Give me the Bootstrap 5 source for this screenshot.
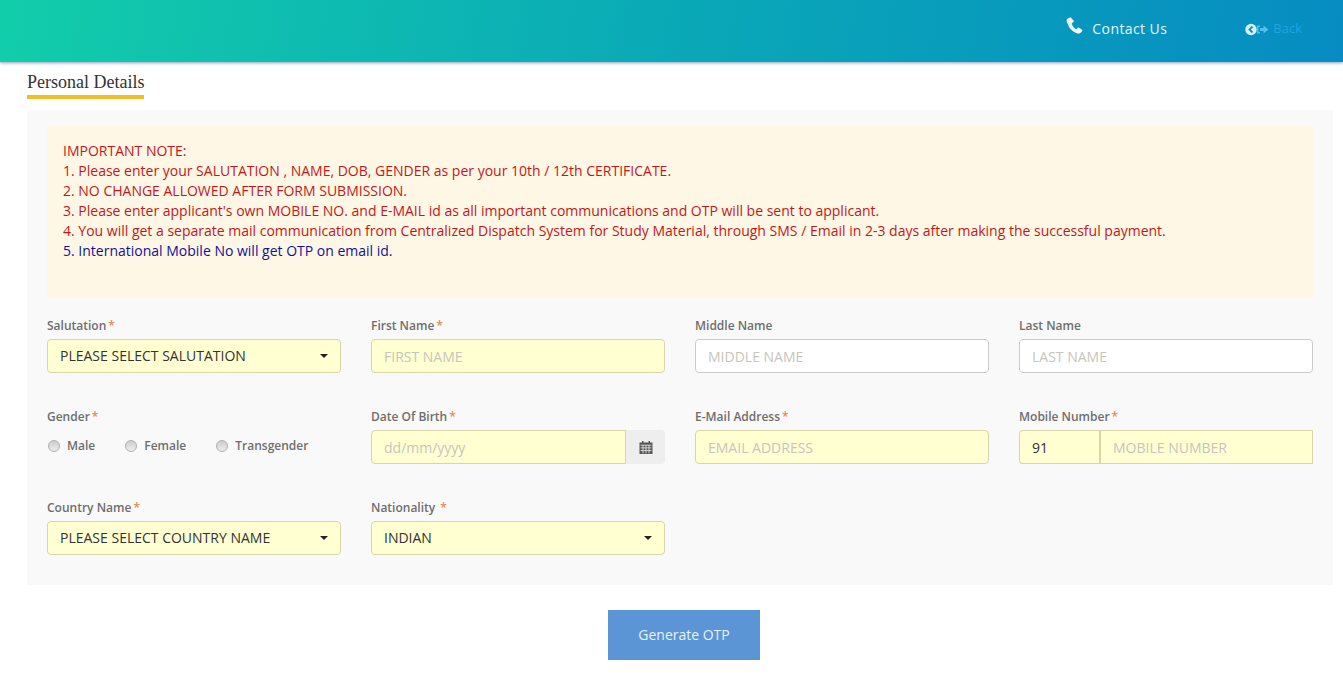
<!DOCTYPE html>
<html lang="en">
<head>
<meta charset="utf-8">
<title>Personal Details</title>
<link href="https://cdn.jsdelivr.net/npm/bootstrap@5.3.0/dist/css/bootstrap.min.css" rel="stylesheet">
<style>
html,body{height:100%;overflow:hidden}
body{font-family:"Open Sans",sans-serif;font-size:14px;color:#555;background:#fff}
.top-bar{height:62px;background:linear-gradient(100deg,#12cdaa 0%,#0aa9b7 50%,#068cc2 100%);box-shadow:0 1px 3px rgba(20,70,130,.5);padding-right:41px}
.contact-link{color:#e4f6fb;font-size:14px;letter-spacing:.42px;text-decoration:none;margin-right:78px;gap:9px;margin-top:-5px}
.contact-link svg{margin-top:-6px}
.back-link{color:#1ea4df;font-size:13px;text-decoration:none;margin-top:-4px;gap:4px}
.page-body{padding:0 10px 0 27px}
.page-title{display:inline-block;font-family:"Liberation Serif",serif;font-size:18px;font-weight:400;line-height:21px;color:#333;margin:10px 0 0;padding-bottom:2px;border-bottom:4px solid #f0bf28}
.form-panel{background:#f9f9f9;margin-top:11px;height:475px;padding:16px 20px 0}
.note-box{background:#fef7e5;height:171px;padding:15px 16px;line-height:20px;font-size:14px;color:#c3171b;margin-bottom:19px}
.note-blue{color:#10109c}
.field-row{display:grid;grid-template-columns:repeat(4,294px);column-gap:30px;row-gap:34px}
.field-label{display:block;font-size:12px;font-weight:600;color:#6e6e6e;line-height:18px;padding-top:1px;margin-bottom:4px}
.req{color:#e88a55;margin-left:2px}
.fld{height:34px;border-radius:4px;font-size:14px;padding:6px 12px;box-shadow:none;color:#333;font-family:"Open Sans",sans-serif}
.fld.form-control,.fld.form-select{border:1px solid #ccc;background-color:#fff}
.fld.req-fld{background-color:#ffffd2;border-color:#d9d5aa}
.fld::placeholder{color:#c6c6bc;opacity:1}
.fld.form-select{background-image:none;padding:5px 30px 7px 12px}
.pick-wrap{position:relative}
.pick-wrap::after{content:"";position:absolute;right:13px;top:15px;border-left:4px solid transparent;border-right:4px solid transparent;border-top:4px solid #222;pointer-events:none}
.cal-addon{width:39px;height:34px;background:#eee;border-radius:0 4px 4px 0;flex:none}
.date-fld{border-radius:4px 0 0 4px!important}
.code-fld{width:82px;flex:none;border-radius:4px 0 0 4px!important;border-right-width:2px!important}
.num-fld{border-radius:0!important;border-left:0!important}
.radio-line{height:34px;gap:30px;margin-top:-1px;padding-left:1px;font-size:12px;font-weight:600;color:#6e6e6e}
.radio-opt{gap:7px}
.radio-dot{width:12px;height:12px;border-radius:50%;border:1px solid #b0b0b0;background:linear-gradient(#ccc,#eee);margin:0;appearance:none;flex:none}
.otp-btn{display:block;width:152px;height:50px;margin:25px 0 0 581px;padding:0 0 2px;background:#5b95d6;color:#e8f2fb;border:0;border-radius:0;font-size:14px}
.otp-btn:hover{background:#5b95d6;color:#e8f2fb}
</style>
</head>
<body>
<header class="top-bar d-flex align-items-center justify-content-end">
  <a href="#" class="contact-link d-flex align-items-center">
    <svg width="17" height="17" viewBox="0 0 17 18"><path fill="#eef9fc" d="M3.600.4 1.300 1.600C.2 2.400-.1 3.800.5 5.600c1 3.100 2.500 5.800 4.700 8 1.900 1.900 3.700 3.300 6.400 3.900 1.400.3 2.800 0 3.700-1l1.400-1.800c.3-.4.2-.9-.2-1.200l-3.300-2.200c-.4-.3-.9-.2-1.200.1l-1.300 1.400c-.2.2-.5.2-.8.1-1.200-.8-2-1.600-2.700-2.600-.7-1-1.300-2.100-1.600-3.200-.1-.3 0-.6.3-.8l1.500-1c.4-.3.5-.8.3-1.200L4.700.7C4.400.3 4 .2 3.600.4Z"/></svg>
    <span>Contact Us</span>
  </a>
  <a href="#" class="back-link d-flex align-items-center">
    <svg width="24" height="13" viewBox="0 0 24 13"><circle cx="6" cy="6.500" r="5.700" fill="#d5f0fa"/><path d="M7.500 3.500 4.500 6.500l3 3" fill="none" stroke="#0a93c0" stroke-width="1.800"/><path fill="#4fc0ec" d="M12 2.500h3v1.500h-1.500v5H15v1.500h-3Z"/><path fill="#4fc0ec" d="M15 5h3.500V2.500l5 4-5 4V8H15Z"/></svg>
    <span>Back</span>
  </a>
</header>
<main class="page-body">
  <h1 class="page-title">Personal Details</h1>
  <form class="form-panel">
    <div class="note-box">
      IMPORTANT NOTE:<br>
      1. Please enter your SALUTATION , NAME, DOB, GENDER as per your 10th / 12th CERTIFICATE.<br>
      2. NO CHANGE ALLOWED AFTER FORM SUBMISSION.<br>
      3. Please enter applicant's own MOBILE NO. and E-MAIL id as all important communications and OTP will be sent to applicant.<br>
      4. You will get a separate mail communication from Centralized Dispatch System for Study Material, through SMS / Email in 2-3 days after making the successful payment.<br>
      <span class="note-blue">5. International Mobile No will get OTP on email id.</span>
    </div>
    <div class="field-row">
      <div>
        <label class="field-label">Salutation<span class="req">*</span></label>
        <div class="pick-wrap"><select class="form-select fld req-fld"><option>PLEASE SELECT SALUTATION</option></select></div>
      </div>
      <div>
        <label class="field-label">First Name<span class="req">*</span></label>
        <input class="form-control fld req-fld" placeholder="FIRST NAME">
      </div>
      <div>
        <label class="field-label">Middle Name</label>
        <input class="form-control fld" placeholder="MIDDLE NAME">
      </div>
      <div>
        <label class="field-label">Last Name</label>
        <input class="form-control fld" placeholder="LAST NAME">
      </div>
      <div>
        <label class="field-label">Gender<span class="req">*</span></label>
        <div class="radio-line d-flex align-items-center">
          <label class="radio-opt d-flex align-items-center"><input type="radio" class="radio-dot" name="g">Male</label>
          <label class="radio-opt d-flex align-items-center"><input type="radio" class="radio-dot" name="g">Female</label>
          <label class="radio-opt d-flex align-items-center"><input type="radio" class="radio-dot" name="g">Transgender</label>
        </div>
      </div>
      <div>
        <label class="field-label">Date Of Birth<span class="req">*</span></label>
        <div class="d-flex">
          <input class="form-control fld req-fld date-fld" placeholder="dd/mm/yyyy">
          <span class="cal-addon d-flex align-items-center justify-content-center">
            <svg width="14" height="14" viewBox="0 0 13 14"><path fill="#555" d="M0 2.500h2.500V1h1.500v1.500h5V1h1.500v1.500H13V14H0Z"/><path stroke="#eee" stroke-width=".8" fill="none" d="M1 5.200h11M1 7.900h11M1 10.600h11M3.500 5v8.500M6.500 5v8.500M9.500 5v8.500"/></svg>
          </span>
        </div>
      </div>
      <div>
        <label class="field-label">E-Mail Address<span class="req">*</span></label>
        <input class="form-control fld req-fld" placeholder="EMAIL ADDRESS">
      </div>
      <div>
        <label class="field-label">Mobile Number<span class="req">*</span></label>
        <div class="d-flex">
          <input class="form-control fld req-fld code-fld" value="91">
          <input class="form-control fld req-fld num-fld" placeholder="MOBILE NUMBER">
        </div>
      </div>
      <div>
        <label class="field-label">Country Name<span class="req">*</span></label>
        <div class="pick-wrap"><select class="form-select fld req-fld"><option>PLEASE SELECT COUNTRY NAME</option></select></div>
      </div>
      <div>
        <label class="field-label">Nationality <span class="req">*</span></label>
        <div class="pick-wrap"><select class="form-select fld req-fld"><option>INDIAN</option></select></div>
      </div>
    </div>
  </form>
  <button type="button" class="btn otp-btn">Generate OTP</button>
</main>
<script src="https://cdn.jsdelivr.net/npm/bootstrap@5.3.0/dist/js/bootstrap.bundle.min.js"></script>
</body>
</html>
